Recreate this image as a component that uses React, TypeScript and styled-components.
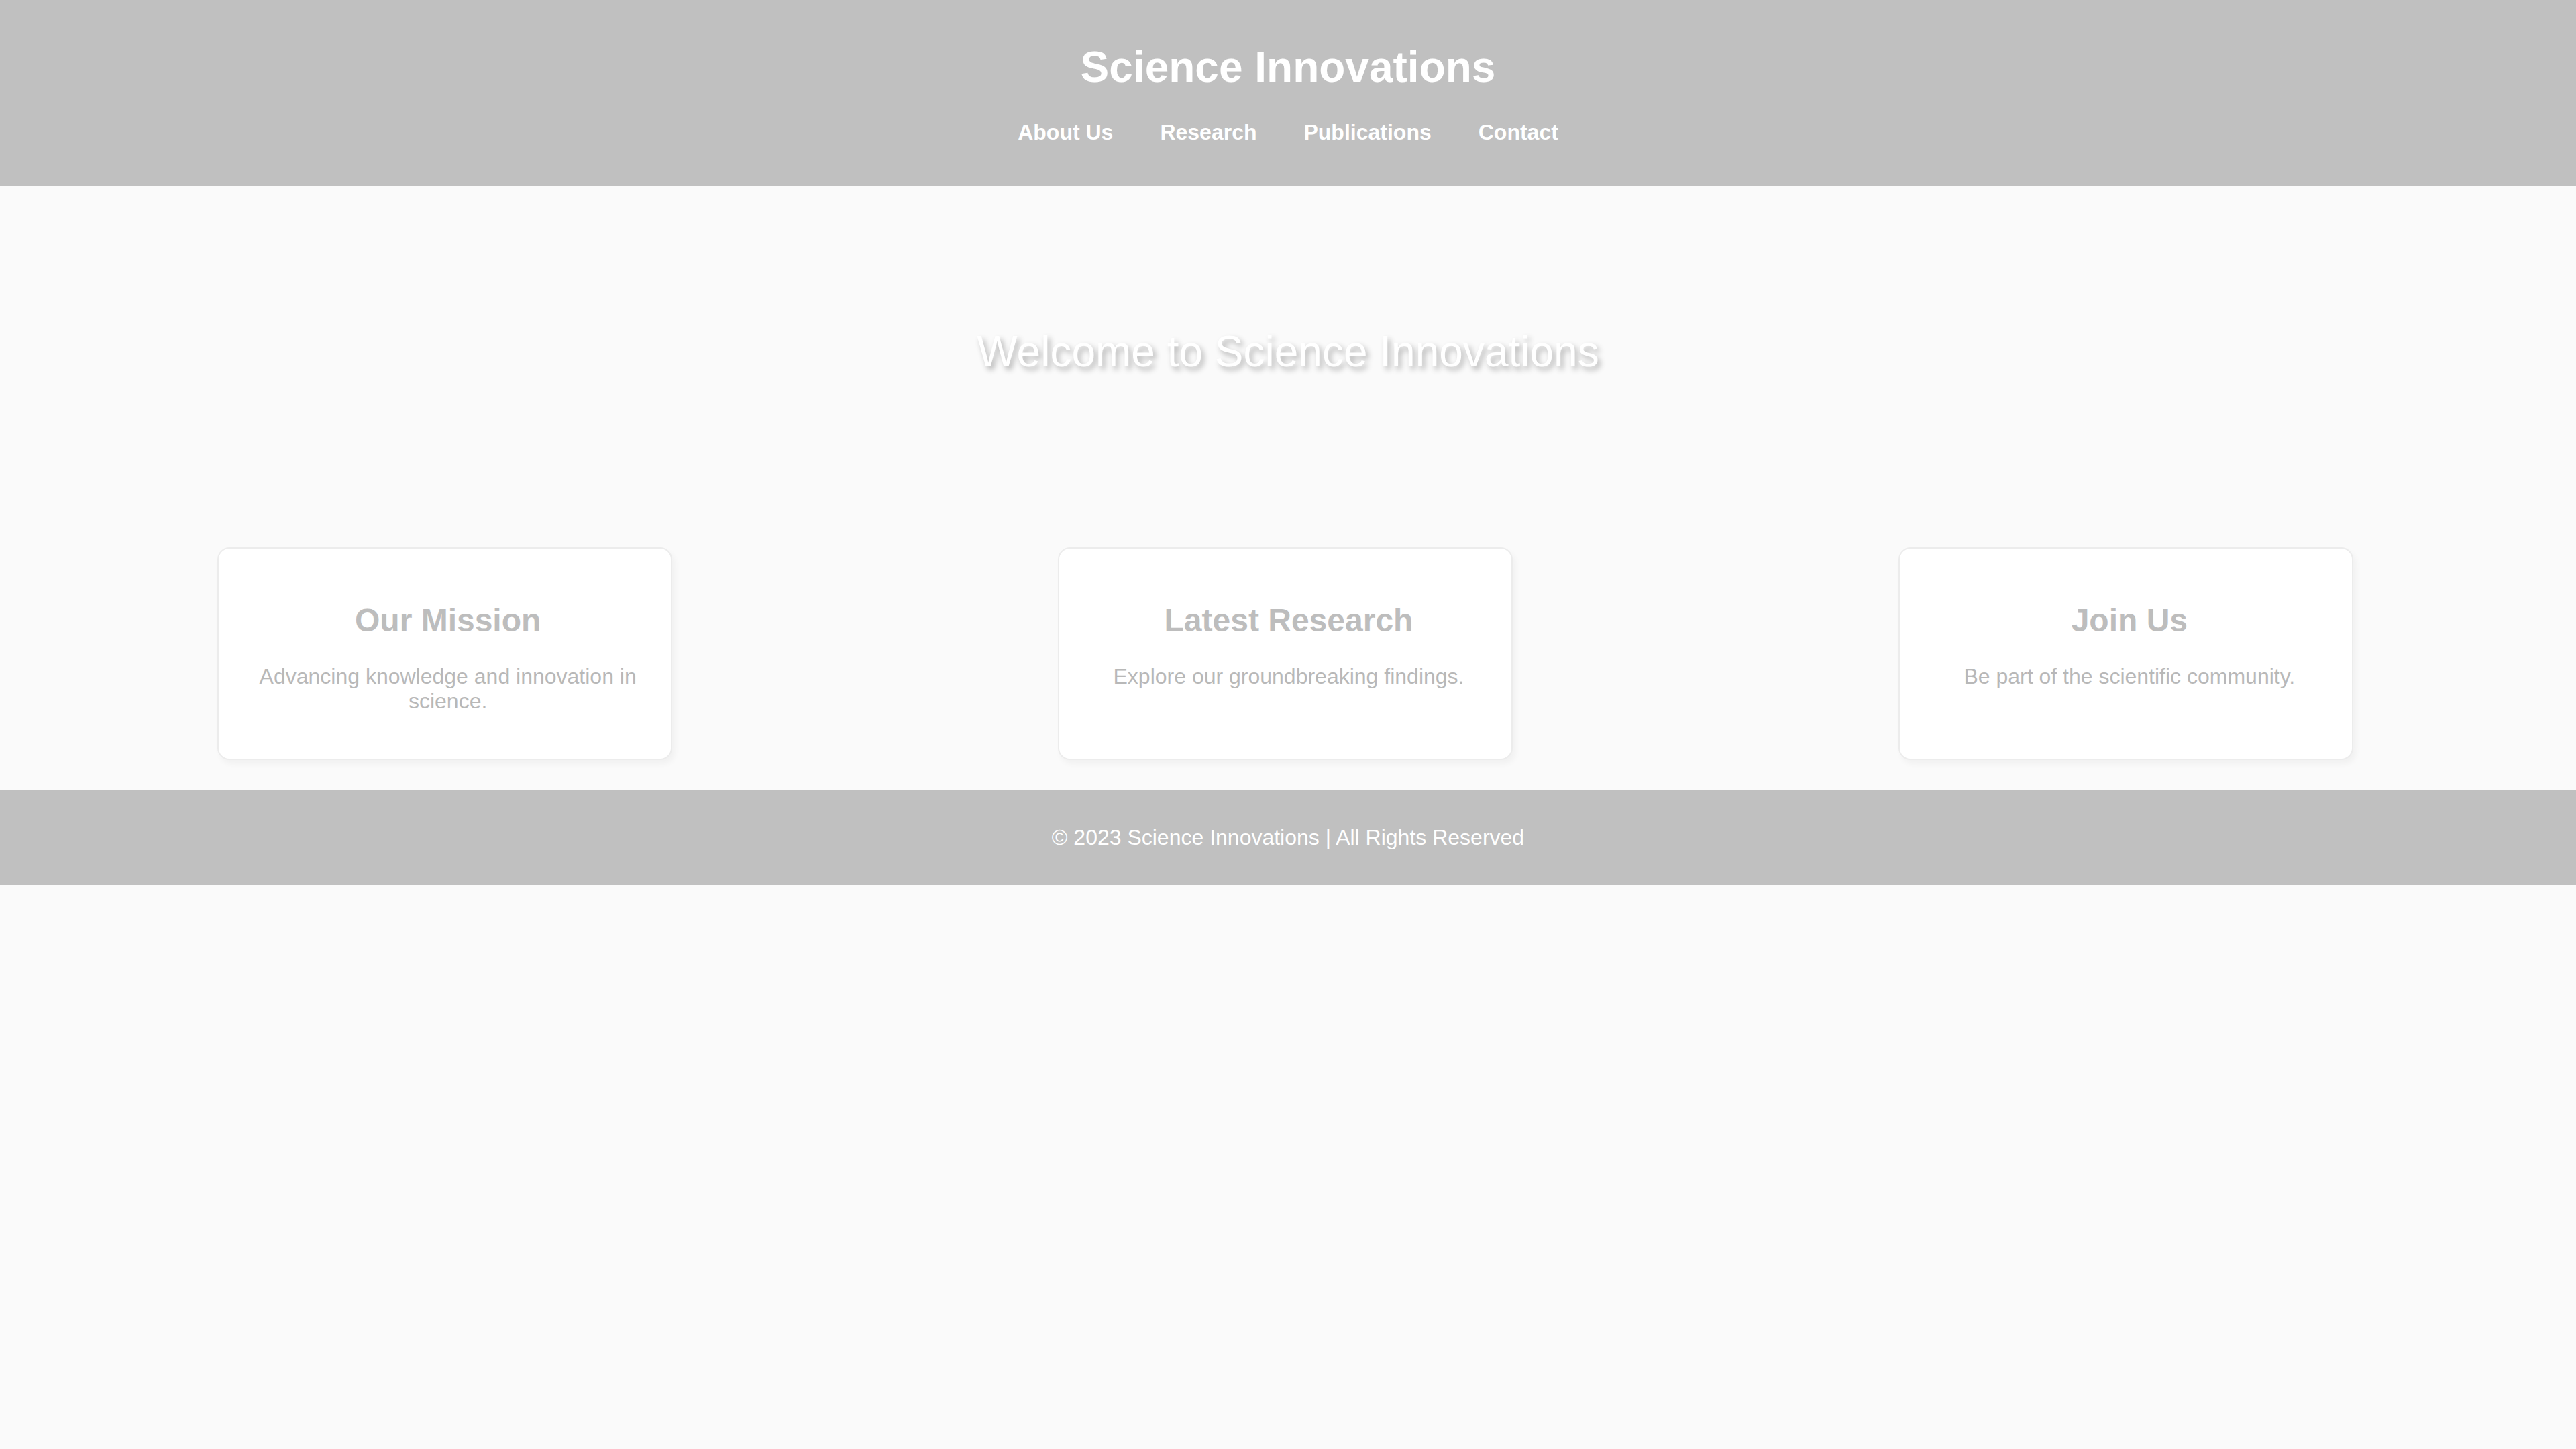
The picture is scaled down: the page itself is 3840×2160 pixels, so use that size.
import React from 'react';
import styled, { createGlobalStyle } from 'styled-components';

const GlobalStyle = createGlobalStyle`
  html, body {
    margin: 0;
    padding: 0;
    background: #fafafa;
    font-family: 'Liberation Sans', Arial, sans-serif;
  }
`;

const Header = styled.header`
  background: #c0c0c0;
  color: #fff;
  text-align: center;
  padding: 63px 0 62px;
`;

const SiteTitle = styled.h1`
  margin: 0 0 42px;
  font-size: 64px;
  font-weight: 700;
  line-height: normal;
`;

const Nav = styled.nav`
  display: flex;
  justify-content: center;
  gap: 70px;
`;

const NavLink = styled.a`
  color: #fff;
  font-size: 32px;
  font-weight: 700;
  text-decoration: none;
`;

const Hero = styled.section`
  padding: 209px 0 215px;
  text-align: center;
`;

const HeroTitle = styled.h2`
  margin: 0;
  font-size: 64px;
  font-weight: 400;
  line-height: normal;
  color: #fff;
  text-shadow: 4px 5px 9px rgba(0, 0, 0, 0.3);
`;

const CardRow = styled.section`
  display: flex;
  justify-content: space-around;
  padding: 40px 44px 45px 36px;
`;

const Card = styled.div`
  box-sizing: border-box;
  width: 678px;
  padding: 32px 36px 32px 46px;
  background: #fff;
  border: 2px solid #ececec;
  border-radius: 18px;
  box-shadow: 4px 6px 10px rgba(0, 0, 0, 0.04);
  text-align: center;
`;

const CardTitle = styled.h3`
  margin: 47px 0 38px;
  font-size: 48px;
  font-weight: 700;
  line-height: normal;
  color: #bdbdbd;
`;

const CardText = styled.p`
  margin: 0 0 35px;
  font-size: 32px;
  line-height: 37px;
  color: #b8b8b8;
`;

const Footer = styled.footer`
  background: #c0c0c0;
  color: #fff;
  text-align: center;
  padding: 52px 0;
  font-size: 32px;
  line-height: normal;
`;

const cards = [
  { title: 'Our Mission', text: 'Advancing knowledge and innovation in science.' },
  { title: 'Latest Research', text: 'Explore our groundbreaking findings.' },
  { title: 'Join Us', text: 'Be part of the scientific community.' },
];

export default function App() {
  return (
    <>
      <GlobalStyle />
      <Header>
        <SiteTitle>Science Innovations</SiteTitle>
        <Nav>
          <NavLink href="#">About Us</NavLink>
          <NavLink href="#">Research</NavLink>
          <NavLink href="#">Publications</NavLink>
          <NavLink href="#">Contact</NavLink>
        </Nav>
      </Header>
      <Hero>
        <HeroTitle>Welcome to Science Innovations</HeroTitle>
      </Hero>
      <CardRow>
        {cards.map((c) => (
          <Card key={c.title}>
            <CardTitle>{c.title}</CardTitle>
            <CardText>{c.text}</CardText>
          </Card>
        ))}
      </CardRow>
      <Footer>© 2023 Science Innovations | All Rights Reserved</Footer>
    </>
  );
}
